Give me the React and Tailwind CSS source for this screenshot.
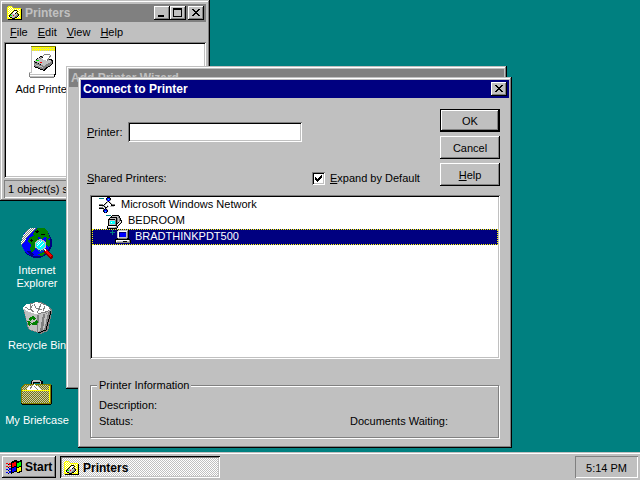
import React from "react";

const COLORS = {
  k: "#000000", w: "#ffffff", g: "#808080", s: "#c0c0c0", y: "#ffff00", o: "#808000",
  b: "#0000ff", n: "#000080", c: "#00ffff", t: "#008080", r: "#ff0000", l: "#00ff00",
};

/* Draws a sprite from rows of palette letters; a dot is a transparent pixel. */
function Sprite({ rows, className }) {
  const width = Math.max(...rows.map((r) => r.length));
  return (
    <svg aria-hidden="true" className={className} width={width} height={rows.length}
      viewBox={`0 0 ${width} ${rows.length}`} shapeRendering="crispEdges">
      {rows.flatMap((row, y) =>
        [...row].map((ch, x) =>
          COLORS[ch] ? <rect key={`${x}-${y}`} x={x} y={y} width="1" height="1" fill={COLORS[ch]} /> : null
        )
      )}
    </svg>
  );
}

const FOLDER = [
  ".yyyy...........",
  "yywywy..........",
  "ywywywyyyyyyyy..",
  "yywywywywywywyk.",
  "ywywywykkkywyyk.",
  "yywywykwwwkywyk.",
  "ywywykwwwkywyyk.",
  "yywykswwkskywyk.",
  "ywykssssssgkyyk.",
  "yykllsrssggkwyk.",
  "ywksssssggkwyyk.",
  "yywkkssgkkwywyk.",
  "yyyyykkkyyyyyyk.",
  ".kkkkkkkkkkkkkk.",
];

const NETWORK = [
  "........kkk.....",
  "ttttt..kbbbk....",
  ".......kbcbk....",
  ".......sbbbs....",
  "........gks.....",
  ".......ks.ks....",
  "......ks...ks...",
  "gggg.ks.....kggg",
  "kkkkks..s...kkkk",
  "...ssks.ks.ssss.",
  "gggg.skks.......",
  "kkkkk.ks........",
  "....gkbks.......",
  "....kbbbk.......",
  "....kbcbk.......",
  ".....kbk........",
];

const DOMAIN = [
  "ttttt.kkkkkkk...",
  ".....kssssssgk..",
  "....kkkkkkksgk..",
  "...ksssssskgsgk.",
  "..kkkkkkkskgsgk.",
  "..kssssssgkgsgkk",
  "..kscccccgkgsgwk",
  "..kscwcccgkgkwsk",
  "..kscccccgkkwsk.",
  "..kssssssgkwsk..",
  "..kkkkkkkkksk...",
  ".kwwwwwwwwgk....",
  ".ksssssssggk....",
  ".kkkkkkkkkk.....",
];

const COMPUTER = [
  "..kssssssssssk..",
  "..swwwwwwwwwgk..",
  "..swnnnnnnnsgk..",
  "..swnbbbbbbsgk..",
  "..swnbbbbbbsgk..",
  "..swnbbbbbbsgk..",
  "..swnbbbbbbsgk..",
  "..swssssssssgk..",
  "..kgggggggggkk..",
  "kkkkkkkkkkkkkkk.",
  "kwwwwwwwwwwwwwgk",
  "kwsssssskkkkssgk",
  "kggggggggggggggk",
];

const CHECK = [
  "......k",
  ".....kk",
  "k...kkk",
  "kk.kkk.",
  "kkkkk..",
  ".kkk...",
  "..k....",
];

function Globe() {
  return (
    <svg aria-hidden="true" width="32" height="32" viewBox="0 0 32 32" shapeRendering="crispEdges">
      <defs>
        <pattern id="frost" width="2" height="2" patternUnits="userSpaceOnUse">
          <path d="M0 0h1v1H0zM1 1h1v1H1z" fill="#fff" />
        </pattern>
      </defs>
      <circle cx="16" cy="16" r="15" fill="#000080" />
      <circle cx="15" cy="15" r="14.5" fill="#0000ff" />
      <path d="M1 11l4-7 5-3h5l-3 4-4 3-3 3-1 4-4 3z" fill="#808080" />
      <path d="M1 11l4-7 5-3h5l-3 4-4 3-3 3-1 4-4 3z" fill="url(#frost)" />
      <path d="M13 4l4-3h6l4 4 2 6-2 1-3-2-3 2-3-2-3 1-3-3z" fill="#008000" />
      <path d="M8 11l4-2 4 1 2 3-3 4-1 5-3 4-2-4 1-4-3-3z" fill="#008000" />
      <path d="M25 12l4 1v5l-2 2-2-2z" fill="#008000" />
      <path d="M14 4l3-1 1 2-3 1zM9 13l2-1 1 2-2 1zM20 7h4v1h-4z" fill="#000" />
      <path d="M16 28l6-3 3 1-4 3z" fill="#008000" />
      <path d="M6 24l4 0 3 4-3 1z" fill="#000080" />
      <circle cx="19.5" cy="18" r="5.7" fill="#c0c0c0" />
      <circle cx="19.5" cy="18" r="4.6" fill="#00ffff" />
      <path d="M16 16l3-2h2l-4 6h-1zM18 20l4-5 1 1-3 5z" fill="url(#frost)" />
      <path d="M15 21l3 3h3l3-2" fill="none" stroke="#008080" />
      <path d="M23 23l2-1 7 7v2l-2 1-2-1-5-6z" fill="#800000" />
      <path d="M25 23l6 6-2 1-5-5z" fill="#ff0000" />
      <path d="M23 22h2v2h-1z" fill="#fff" />
    </svg>
  );
}

function Bin() {
  return (
    <svg aria-hidden="true" width="32" height="32" viewBox="0 0 32 32" shapeRendering="crispEdges">
      <path d="M2 5l4-3 5-1 4-1 5 0 4 2 3 2 4 3 0 3-4 19-7 3-9-3-4-2z" fill="#808080" />
      <path d="M3 8l13 4 0 18-8-3z" fill="#c0c0c0" />
      <path d="M17 12l12-3-4 18-7 4z" fill="#808080" />
      <path d="M18 13l4-1-3 17-2 1zM24 12l3-1-4 17-1 0z" fill="#c0c0c0" />
      <path d="M3 4l3-2 5 0 4-2 4 1 4 2 4 1 2 4-7 2-7 2-7-2-6-3z" fill="#fff" />
      <path d="M4 5l5 3M9 2l0 5 4 3M13 2l2 4 6 2M20 2l-2 5-2 4M24 4l-2 5M9 7l3-4" fill="none" stroke="#808080" />
      <path d="M2 7l5 3 9 3 9-2 5-3" fill="none" stroke="#c0c0c0" />
      <path d="M17 31l8-3 5-19" fill="none" stroke="#000" />
      <path d="M9 15l4-1 2 3-3 1-1-1-1 2-2-1zM6 19l3 0 1 2-1 0 1 2-2 1zM11 23l5 0 1-4-2-1-1 2-4 1z" fill="#008000" />
    </svg>
  );
}

function Briefcase() {
  return (
    <svg aria-hidden="true" width="32" height="32" viewBox="0 0 32 32" shapeRendering="crispEdges">
      <defs>
        <pattern id="canvas" width="2" height="2" patternUnits="userSpaceOnUse">
          <rect width="2" height="2" fill="#808000" />
          <path d="M0 0h1v1H0zM1 1h1v1H1z" fill="#c0c0c0" />
        </pattern>
      </defs>
      <path d="M11 3h9v1h2v5h-3V6h-6v3h-3V4h1z" fill="#000" />
      <path d="M12 3h7v1h1v4h-1V5h-7v3h-1V4h1z" fill="#c0c0c0" />
      <path d="M3 7h26l2 2v17l-2 2H1l-1-2V10z" fill="#000" />
      <path d="M3 7h26l1 1v18l-1 1H1l-1-1V10z" fill="#808000" />
      <path d="M3 8h25v5H1v-3z" fill="url(#canvas)" />
      <path d="M6 13v-2l3-2 2 0 2-2 3 2 3 3 2 1z" fill="#fff" />
      <path d="M9 12l3-4M13 9l4 4" stroke="#808080" fill="none" />
      <path d="M1 13h28v1H1z" fill="#ffff00" />
      <path d="M1 14h28v12H1z" fill="url(#canvas)" />
      <path d="M28 9h1v16h-1z" fill="#ffff00" />
    </svg>
  );
}

function AddPrinter() {
  return (
    <svg aria-hidden="true" width="32" height="32" viewBox="0 0 32 32" shapeRendering="crispEdges">
      <defs>
        <pattern id="binding" width="2" height="2" patternUnits="userSpaceOnUse">
          <rect width="2" height="2" fill="#ffff00" />
          <path d="M0 0h1v1H0z" fill="#c0c0c0" />
        </pattern>
      </defs>
      <path d="M4 1h24v26l-2 4H2v-3l2-1z" fill="#fff" />
      <path d="M2 26h2v1H2zM2 28h25v1H2zM3 30h24v1H3zM3 26h1V1h1v26H3z" fill="#c0c0c0" />
      <path d="M2 27h1v4H2zM3 31h24v1H3z" fill="#808080" />
      <path d="M4 0h25v1H4z" fill="#808000" />
      <path d="M5 1h23v4H5z" fill="url(#binding)" />
      <path d="M28 1h1v28h-1v2h-1v-3h1z" fill="#000" />
      <path d="M7 15l7-5 12 4v4l-9 7-10-4z" fill="#000" />
      <path d="M7 15l7-4 11 4-8 5z" fill="#c0c0c0" />
      <path d="M7 16l10 4v4L7 20z" fill="#808080" />
      <path d="M8 18l8 3v1l-8-3z" fill="#c0c0c0" />
      <path d="M17 20l8-5v3l-8 5z" fill="#808080" />
      <path d="M14 13l5-5h4l1 1-4 6z" fill="#fff" />
      <path d="M13 13l5-5h5M24 9l-4 6" stroke="#808080" fill="none" />
      <path d="M9 14h3v1H9z" fill="#00ff00" />
      <path d="M13 16h2v1h-2z" fill="#ff0000" />
    </svg>
  );
}

function Flag() {
  return (
    <svg aria-hidden="true" width="17" height="14" viewBox="0 0 17 14" shapeRendering="crispEdges">
      <path d="M5 2l4-2 3 1 4-1v12l-4 1-3-1-4 2z" fill="#000" />
      <path d="M6 3l3-1 1 0v4l-4 1z" fill="#ff0000" />
      <path d="M11 3l4-1v4l-4 1z" fill="#00ff00" />
      <path d="M6 8l3-1 1 0v4l-4 1z" fill="#0000ff" />
      <path d="M11 8l4-1v4l-4 1z" fill="#ffff00" />
      <path d="M0 3h2v1H0zM3 3h2v2H3zM0 6h2v1H0zM3 6h2v1H3z" fill="#ff0000" />
      <path d="M0 9h2v1H0zM3 8h2v2H3zM0 12h2v1H0zM3 11h2v2H3z" fill="#0000ff" />
      <path d="M2 4h1v1H2zM2 7h1v1H2zM2 10h1v1H2zM2 13h1v1H2z" fill="#000" />
    </svg>
  );
}

const WINDOW =
  "bg-[#c0c0c0] shadow-[inset_-1px_-1px_0_#000,inset_1px_1px_0_#c0c0c0,inset_-2px_-2px_0_#808080,inset_2px_2px_0_#fff]";
const RAISED = "bg-[#c0c0c0] shadow-[inset_-1px_-1px_0_#000,inset_1px_1px_0_#fff,inset_-2px_-2px_0_#808080]";
const SUNKEN =
  "bg-white shadow-[inset_1px_1px_0_#808080,inset_-1px_-1px_0_#fff,inset_2px_2px_0_#000,inset_-2px_-2px_0_#c0c0c0]";
const WELL = "shadow-[inset_1px_1px_0_#808080,inset_-1px_-1px_0_#fff]";

function CaptionButton({ label, children }) {
  return (
    <button type="button" aria-label={label} className={`h-3.5 w-4 ${RAISED}`}>
      <svg aria-hidden="true" width="16" height="14" viewBox="0 0 16 14" shapeRendering="crispEdges" fill="#000">
        {children}
      </svg>
    </button>
  );
}

function CloseButton() {
  return (
    <CaptionButton label="Close">
      <path d="M4 3h2v1h1v1h2v-1h1v-1h2v1h-1v1h-1v1h-1v1h1v1h1v1h1v1h-2v-1h-1v-1h-2v1h-1v1h-2v-1h1v-1h1v-1h1v-1h-1v-1h-1v-1h-1z" />
    </CaptionButton>
  );
}

function Key({ letter, rest }) {
  return (
    <span>
      <u className="underline-offset-1">{letter}</u>
      {rest}
    </span>
  );
}

function Shortcut({ icon, label }) {
  return (
    <button type="button" className="flex h-[75px] w-[74px] flex-col items-center gap-[5px] leading-[13px] text-white">
      {icon}
      <span className="w-16 text-center">{label}</span>
    </button>
  );
}

function PrintersWindow() {
  return (
    <section aria-label="Printers" className={`absolute top-0 left-0 flex h-[201px] w-[210px] flex-col pt-1 pr-1 pl-0.5 ${WINDOW}`}>
      <header className="flex h-[18px] items-center bg-[#808080] pr-0.5 pl-[5px] text-[#c0c0c0]">
        <Sprite rows={FOLDER} />
        <h2 className="ml-0.5 flex-1 text-[12px] font-bold">Printers</h2>
        <CaptionButton label="Minimize"><path d="M4 9h6v2H4z" /></CaptionButton>
        <CaptionButton label="Maximize"><path d="M3 2h9v9H3zM4 4v6h7V4z" fillRule="evenodd" /></CaptionButton>
        <span className="w-0.5" />
        <CloseButton />
      </header>
      <nav className="flex h-5 items-center gap-2.5 pl-2">
        <button type="button"><Key letter="F" rest="ile" /></button>
        <button type="button"><Key letter="E" rest="dit" /></button>
        <button type="button"><Key letter="V" rest="iew" /></button>
        <button type="button"><Key letter="H" rest="elp" /></button>
      </nav>
      <div className={`ml-0.5 flex-1 px-0.5 pt-1 ${SUNKEN}`}>
        <button type="button" className="flex w-[74px] flex-col items-center gap-[5px] leading-[13px]">
          <AddPrinter />
          <span className="whitespace-nowrap">Add Printer</span>
        </button>
      </div>
      <p className={`mt-0.5 mb-[3px] ml-0.5 h-[18px] pl-1 leading-[18px] ${WELL}`}>1 object(s) selected</p>
    </section>
  );
}

function WizardWindow() {
  return (
    <section aria-label="Add Printer Wizard" className={`absolute top-[66px] left-[66px] h-[323px] w-[441px] p-[3px] ${WINDOW}`}>
      <header className="flex h-[18px] items-center bg-[#808080] pl-0.5 text-[#c0c0c0]">
        <h2 className="text-[12px] font-bold">Add Printer Wizard</h2>
      </header>
    </section>
  );
}

function ConnectDialog() {
  return (
    <section role="dialog" aria-label="Connect to Printer" className={`absolute top-[77px] left-[78px] w-[434px] p-[3px] ${WINDOW}`}>
      <header className="flex h-[18px] items-center justify-between bg-[#000080] px-0.5 text-white">
        <h2 className="text-[12px] font-bold">Connect to Printer</h2>
        <CloseButton />
      </header>
      <form className="flex flex-col pt-[11px] pr-[9px] pb-[7px] pl-1.5" onSubmit={(e) => e.preventDefault()}>
        <div className="flex">
          <div className="flex flex-1 flex-col pt-[13px]">
            <div className="flex items-center">
              <label htmlFor="printer" className="w-[41px]"><Key letter="P" rest="rinter:" /></label>
              <input id="printer" type="text" className={`h-5 w-[174px] px-1 outline-none ${SUNKEN}`} />
            </div>
            <div className="mt-[30px] flex items-center leading-[13px]">
              <span id="shared" className="w-[225px]"><Key letter="S" rest="hared Printers:" /></span>
              <label className="flex items-center gap-[5px]">
                <span className="grid size-[13px]">
                  <input type="checkbox" defaultChecked className={`peer col-start-1 row-start-1 size-[13px] appearance-none ${SUNKEN}`} />
                  <Sprite rows={CHECK} className="pointer-events-none invisible col-start-1 row-start-1 place-self-center peer-checked:visible" />
                </span>
                <Key letter="E" rest="xpand by Default" />
              </label>
            </div>
          </div>
          <div className="flex w-[60px] flex-col gap-1">
            <button type="submit" className="h-[23px] bg-[#c0c0c0] shadow-[inset_0_0_0_1px_#000,inset_-2px_-2px_0_#000,inset_2px_2px_0_#fff,inset_-3px_-3px_0_#808080]">OK</button>
            <button type="button" className={`h-[23px] ${RAISED}`}>Cancel</button>
            <button type="button" className={`h-[23px] ${RAISED}`}><Key letter="H" rest="elp" /></button>
          </div>
        </div>
        <ul role="tree" aria-labelledby="shared" className={`mt-[9px] ml-[3px] h-[164px] p-0.5 leading-[14px] ${SUNKEN}`}>
          <li role="treeitem" className="flex h-4 gap-1.5 pl-[7px]">
            <Sprite rows={NETWORK} />
            <span>Microsoft Windows Network</span>
          </li>
          <li role="treeitem" className="flex h-4 gap-1.5 pl-3.5">
            <Sprite rows={DOMAIN} className="mt-0.5" />
            <span>BEDROOM</span>
          </li>
          <li role="treeitem" aria-selected="true" className="flex h-4 border border-dotted border-[#ffff00] bg-[#000080] pl-[17px] leading-[12px] text-white">
            <svg aria-hidden="true" width="5" height="5" viewBox="0 0 5 5" shapeRendering="crispEdges">
              <path d="M0 2h5v1H0zM2 0h1v5H2z" fill="#008080" />
            </svg>
            <Sprite rows={COMPUTER} className="mr-1" />
            <span>BRADTHINKPDT500</span>
          </li>
        </ul>
        <fieldset className="mt-5 mr-px ml-[3px] border border-[#808080] px-2 pt-[5px] pb-2 leading-4 shadow-[1px_1px_0_#fff,inset_1px_1px_0_#fff]">
          <legend className="-ml-0.5 bg-[#c0c0c0] px-0.5 leading-[13px]">Printer Information</legend>
          <p>Description:</p>
          <div className="flex">
            <p className="w-[251px]">Status:</p>
            <p>Documents Waiting:</p>
          </div>
        </fieldset>
      </form>
    </section>
  );
}

export default function App() {
  return (
    <div className="flex h-screen flex-col overflow-hidden bg-[#008080] font-['Liberation_Sans',Arial,sans-serif] text-[11px] leading-4 text-black">
      <main className="relative min-h-0 flex-1 overflow-hidden">
        <nav aria-label="Desktop" className="flex flex-col pt-[227px]">
          <Shortcut icon={<Globe />} label="Internet Explorer" />
          <Shortcut icon={<Bin />} label="Recycle Bin" />
          <Shortcut icon={<Briefcase />} label="My Briefcase" />
        </nav>
        <PrintersWindow />
        <WizardWindow />
        <ConnectDialog />
      </main>
      <footer className="flex h-7 shrink-0 items-start bg-[#c0c0c0] px-0.5 pt-1 shadow-[inset_0_1px_0_#c0c0c0,inset_0_2px_0_#fff]">
        <button type="button" className={`flex h-[22px] w-[54px] items-center gap-0.5 pl-1 text-[12px] font-bold ${RAISED}`}>
          <Flag />
          Start
        </button>
        <button
          type="button"
          className="ml-1 flex h-[22px] w-40 items-center gap-[3px] bg-[repeating-conic-gradient(#fff_0_25%,#c0c0c0_0_50%)] bg-[length:2px_2px] pt-0.5 pl-1 text-[12px] font-bold shadow-[inset_1px_1px_0_#000,inset_-1px_-1px_0_#fff,inset_2px_2px_0_#808080,inset_-2px_-2px_0_#c0c0c0]"
        >
          <Sprite rows={FOLDER} />
          Printers
        </button>
        <time className={`ml-auto flex h-[22px] w-[63px] items-center justify-center pt-0.5 ${WELL}`}>5:14 PM</time>
      </footer>
    </div>
  );
}
